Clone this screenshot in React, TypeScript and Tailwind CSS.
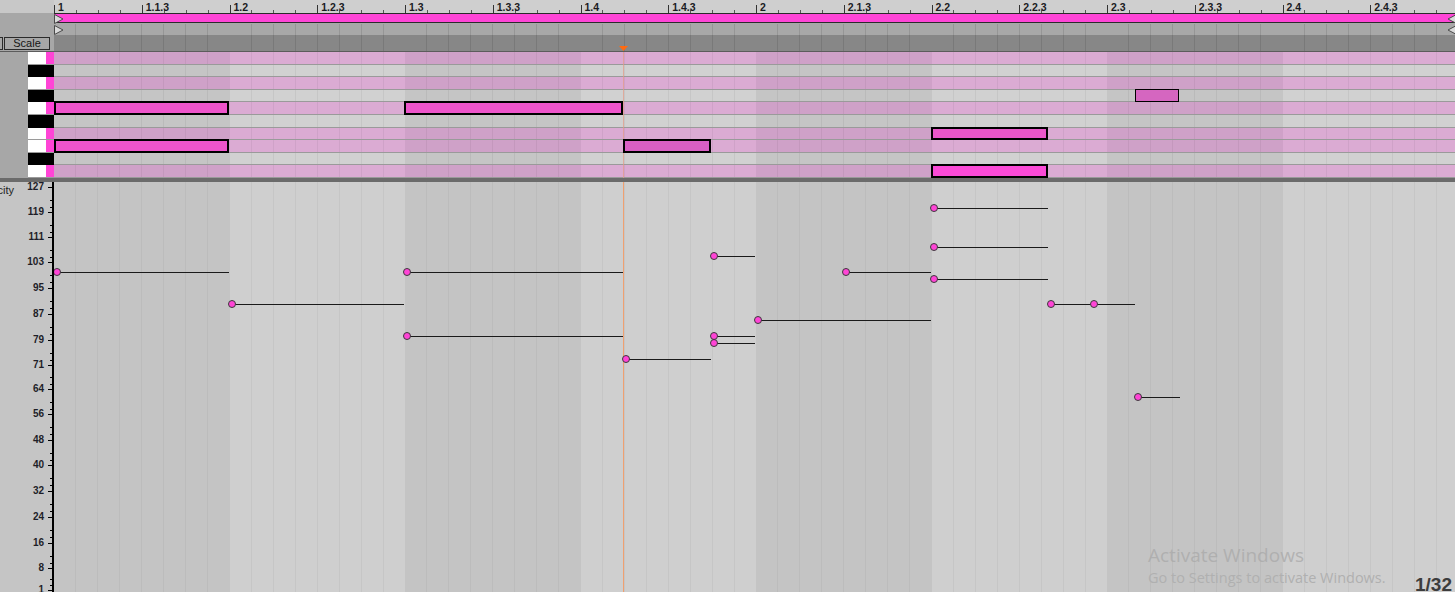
const BEAT = 175.5;
const ROW = 12.6;
const LANE_TOP = 182;

const rulerLabels = [
  "1", "1.1.3", "1.2", "1.2.3", "1.3", "1.3.3", "1.4", "1.4.3",
  "2", "2.1.3", "2.2", "2.2.3", "2.3", "2.3.3", "2.4", "2.4.3",
];

// top row first: B A# A G# G F# F E D# D
const keyRows: Array<"w" | "b"> = ["w", "b", "w", "b", "w", "b", "w", "w", "b", "w"];

type Note = { row: number; start: number; end: number; fill: string; thin?: boolean };

// x values are screen px, canvas starts at 54
const notes: Note[] = [
  { row: 4, start: 54, end: 229, fill: "bg-[#ee54cb]" },
  { row: 4, start: 404, end: 623, fill: "bg-[#ee54cb]" },
  { row: 7, start: 54, end: 229, fill: "bg-[#ee54cb]" },
  { row: 7, start: 623, end: 711, fill: "bg-[#d95fc4]" },
  { row: 6, start: 931, end: 1048, fill: "bg-[#ea56c9]" },
  { row: 9, start: 931, end: 1048, fill: "bg-[#fb4ad7]" },
  { row: 3, start: 1135, end: 1179, fill: "bg-[#d566c0]", thin: true },
];

const velocities: Array<[number, number, number]> = [
  [54, 100, 229],
  [229, 90, 404],
  [404, 100, 623],
  [404, 80, 623],
  [623, 73, 711],
  [711, 105, 755],
  [711, 80, 755],
  [711, 78, 755],
  [755, 85, 931],
  [843, 100, 931],
  [931, 120, 1048],
  [931, 108, 1048],
  [931, 98, 1048],
  [1048, 90, 1135],
  [1091, 90, 1135],
  [1135, 61, 1180],
];

const axisLabels: Array<[string, number]> = [
  ["127", 187], ["119", 212], ["111", 237], ["103", 262], ["95", 288],
  ["87", 314], ["79", 340], ["71", 365], ["64", 389], ["56", 414],
  ["48", 440], ["40", 465], ["32", 491], ["24", 517], ["16", 543],
  ["8", 568], ["1", 590],
];

function velY(v: number) {
  return 589 - (v - 1) * 3.2;
}

function BeatGrid({ dark, light, line }: { dark: string; light: string; line: string }) {
  return (
    <div className="flex h-full">
      {Array.from({ length: 8 }, (_, b) => (
        <div
          key={b}
          className={`flex h-full w-[175.5px] shrink-0 ${b % 2 === 0 ? dark : light}`}
        >
          {Array.from({ length: 8 }, (_, s) => (
            <div key={s} className={`h-full flex-1 ${s > 0 ? `border-l ${line}` : ""}`} />
          ))}
        </div>
      ))}
    </div>
  );
}

function Marker({ dir }: { dir: "right" | "left" }) {
  return (
    <svg width="10" height="10" viewBox="0 0 10 10">
      {dir === "right" ? (
        <path d="M0.5 0.5 L9 5 L0.5 9.5 Z" fill="#dadada" stroke="#4a4a4a" strokeWidth="1" />
      ) : (
        <path d="M9.5 0.5 L1 5 L9.5 9.5 Z" fill="#dadada" stroke="#4a4a4a" strokeWidth="1" />
      )}
    </svg>
  );
}

export default function App() {
  return (
    <div className="relative flex h-[592px] w-[1455px] flex-col overflow-hidden bg-[#c4c4c4] font-['Liberation_Sans',Arial,sans-serif] text-[#1c1c1c]">
      {/* ruler */}
      <div className="flex h-[13px] shrink-0">
        <div className="w-[54px] shrink-0 bg-[#c8c8c8]" />
        <div className="relative flex-1 overflow-hidden bg-[#cfcfcf]">
          {Array.from({ length: 64 }, (_, i) =>
            i % 4 === 0 ? null : (
              <div
                key={i}
                className="absolute bottom-0 h-[3px] w-px bg-[#555]"
                style={{ left: (i * BEAT) / 8 }}
              />
            )
          )}
          {rulerLabels.map((label, i) => (
            <div key={label} className="absolute top-0 h-full" style={{ left: (i * BEAT) / 2 }}>
              <div className="absolute left-0 top-[5px] h-[8px] w-px bg-[#333]" />
              <span className="absolute left-[4px] top-[2px] whitespace-nowrap text-[10.5px] font-bold leading-none text-[#1a1a22]">
                {label}
              </span>
            </div>
          ))}
        </div>
      </div>

      {/* loop brace */}
      <div className="flex h-[11px] shrink-0">
        <div className="w-[54px] shrink-0 bg-[#a7a7a7]" />
        <div className="relative flex-1 overflow-hidden bg-[#a8a8a8]">
          <div className="h-[10px] border-y border-[#2b2b2b] bg-[#ff45d7]" />
          <div className="absolute left-0 top-[1px]">
            <Marker dir="right" />
          </div>
          <div className="absolute left-[1393px] top-[1px]">
            <Marker dir="left" />
          </div>
        </div>
      </div>

      {/* start / end markers */}
      <div className="flex h-[11px] shrink-0">
        <div className="w-[54px] shrink-0 bg-[#a7a7a7]" />
        <div className="relative flex-1 overflow-hidden">
          <BeatGrid dark="bg-[#a8a8a8]" light="bg-[#a8a8a8]" line="border-black/10" />
          <div className="absolute left-0 top-[1px]">
            <Marker dir="right" />
          </div>
          <div className="absolute left-[1393px] top-[1px]">
            <Marker dir="left" />
          </div>
        </div>
      </div>

      {/* scale row */}
      <div className="flex h-[17px] shrink-0 border-b border-[#5c5c5c]">
        <div className="flex w-[54px] shrink-0 items-center bg-[#a7a7a7]">
          <div className="h-[13px] w-[3px] border-y border-r border-[#2a2a2a]" />
          <div className="ml-[1px] flex h-[13px] w-[46px] items-center justify-center border border-[#2a2a2a] text-[11px] leading-none text-[#151515]">
            Scale
          </div>
        </div>
        <div className="relative flex-1 overflow-hidden">
          <BeatGrid dark="bg-[#878787]" light="bg-[#878787]" line="border-black/10" />
          <svg
            className="absolute left-[565px] top-[11px]"
            width="9"
            height="5"
            viewBox="0 0 9 5"
          >
            <path d="M0 0 L9 0 L4.5 5 Z" fill="#ff6a10" />
          </svg>
        </div>
      </div>

      {/* note lane */}
      <div className="flex h-[126px] shrink-0">
        <div className="flex w-[54px] shrink-0">
          <div className="w-[28px] bg-[#a7a7a7]" />
          <div className="flex w-[26px] flex-col">
            {keyRows.map((k, i) =>
              k === "w" ? (
                <div key={i} className="flex h-[12.6px] border-b border-[#9a9a9a]">
                  <div className="flex-1 bg-white" />
                  <div className="w-[8px] bg-[#ff44d6]" />
                </div>
              ) : (
                <div key={i} className="h-[12.6px] bg-black" />
              )
            )}
          </div>
        </div>
        <div className="relative flex-1 overflow-hidden">
          <div className="flex h-full flex-col">
            {keyRows.map((k, i) => (
              <div key={i} className="h-[12.6px] border-b border-[#9a9a9a]">
                {k === "w" ? (
                  <BeatGrid dark="bg-[#cfa1c8]" light="bg-[#dbabd3]" line="border-black/5" />
                ) : (
                  <BeatGrid dark="bg-[#c5c5c5]" light="bg-[#d1d1d1]" line="border-black/5" />
                )}
              </div>
            ))}
          </div>
          <div className="absolute top-0 left-[569px] h-full w-px bg-[#e49a86]/70" />
          {notes.map((n, i) => (
            <div
              key={i}
              className={`absolute border-black ${n.thin ? "border" : "border-2"} ${n.fill}`}
              style={{
                left: n.start - 54,
                top: n.row * ROW - 1,
                width: n.end - n.start,
                height: ROW + 1,
              }}
            />
          ))}
        </div>
      </div>

      <div className="h-[4px] shrink-0 bg-[#6b6b6b]" />

      {/* velocity lane */}
      <div className="flex flex-1">
        <div className="relative w-[54px] shrink-0 overflow-hidden bg-[#c5c5c5]">
          <span className="absolute right-[40px] top-[3px] text-[11px] leading-none text-[#1f1f1f]">
            Velocity
          </span>
          {axisLabels.map(([label, y], i) => {
            const next = axisLabels[i + 1];
            const top = y - LANE_TOP;
            return (
              <div key={label}>
                <span
                  className="absolute right-[10px] text-[10px] font-bold leading-none text-[#1e1e28]"
                  style={{ top: Math.max(top - 5, 0) }}
                >
                  {label}
                </span>
                <div className="absolute left-[48px] h-px w-[4px] bg-black" style={{ top }} />
                {next ? (
                  <>
                    <div
                      className="absolute left-[50px] h-px w-[2px] bg-black"
                      style={{ top: Math.round(top + (next[1] - y) * 0.5) }}
                    />
                    <div
                      className="absolute left-[50px] h-px w-[2px] bg-black"
                      style={{ top: Math.round(top + (next[1] - y) * 0.78) }}
                    />
                  </>
                ) : null}
              </div>
            );
          })}
          <div className="absolute right-0 top-0 h-full w-[2px] bg-black" />
        </div>
        <div className="relative flex-1 overflow-hidden">
          <BeatGrid dark="bg-[#c4c4c4]" light="bg-[#cfcfcf]" line="border-black/[0.04]" />
          <div className="absolute top-0 left-[569px] h-full w-px bg-[#f0a070]" />
          {velocities.map(([start, v, end], i) => {
            const cx = start + 3 - 54;
            const cy = Math.round(velY(v) - LANE_TOP);
            return (
              <div key={i}>
                <div
                  className="absolute h-px bg-[#1a1a1a]"
                  style={{ left: cx, top: cy, width: end - start - 3 }}
                />
                <div
                  className="absolute h-[8px] w-[8px] rounded-full border border-[#3a3a3a] bg-[#ff44d6]"
                  style={{ left: cx - 4, top: cy - 4 }}
                />
              </div>
            );
          })}
        </div>
      </div>

      {/* overlays */}
      <div className="pointer-events-none absolute left-[1148px] top-[546px] font-['Open_Sans',sans-serif] leading-none text-[#aaaaaa]/80">
        <div className="whitespace-nowrap text-[19px]">Activate Windows</div>
        <div className="mt-[6px] whitespace-nowrap text-[14.5px] text-[#b0b0b0]">
          Go to Settings to activate Windows.
        </div>
      </div>
      <div className="absolute bottom-[-2px] right-[3px] text-[19px] font-bold leading-none text-[#3c3c3c]">
        1/32
      </div>
    </div>
  );
}
